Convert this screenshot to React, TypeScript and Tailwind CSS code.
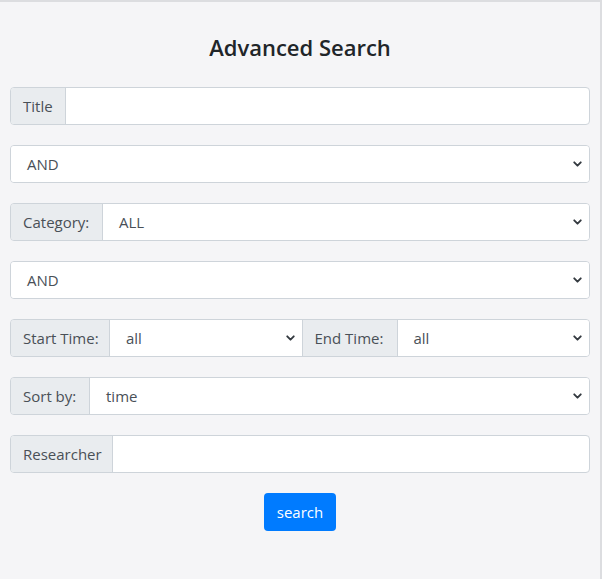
import { ChevronDown } from "lucide-react";

const font = { fontFamily: '"Open Sans", "Noto Sans", sans-serif' };

function Label({ text, width }: { text: string; width: string }) {
  return (
    <span
      className={`flex h-full shrink-0 items-center whitespace-nowrap border-r border-[#ced4da] bg-[#e9ecef] px-3 text-[15px] text-[#495057] ${width}`}
    >
      {text}
    </span>
  );
}

function Select({ value }: { value: string }) {
  return (
    <div className="relative flex h-full min-w-0 flex-1 items-center bg-white pl-[16px] text-[15px] text-[#495057]">
      <span>{value}</span>
      <ChevronDown
        className="absolute right-[5px] top-1/2 h-[13px] w-[13px] -translate-y-1/2 text-[#343a40]"
        strokeWidth={3.5}
      />
    </div>
  );
}

export default function App() {
  return (
    <div
      className="h-[579px] w-[602px] border-r-2 border-t-2 border-[#dcdde0] bg-[#f5f5f7]"
      style={font}
    >
      <div className="flex flex-col gap-5 px-[10px]">
        <h3 className="mt-[30px] mb-[5px] text-center text-[22px] font-semibold leading-[30px] text-[#212529]">
          Advanced Search
        </h3>

        <div className="flex h-[38px] overflow-hidden rounded border border-[#ced4da] bg-white">
          <Label text="Title" width="w-[55px]" />
          <div className="flex-1" />
        </div>

        <div className="flex h-[38px] overflow-hidden rounded border border-[#ced4da]">
          <Select value="AND" />
        </div>

        <div className="flex h-[38px] overflow-hidden rounded border border-[#ced4da]">
          <Label text="Category:" width="w-[92px]" />
          <Select value="ALL" />
        </div>

        <div className="flex h-[38px] overflow-hidden rounded border border-[#ced4da]">
          <Select value="AND" />
        </div>

        <div className="flex h-[38px] overflow-hidden rounded border border-[#ced4da]">
          <Label text="Start Time:" width="w-[99px]" />
          <Select value="all" />
          <span className="h-full border-l border-[#ced4da]" />
          <Label text="End Time:" width="w-[95px]" />
          <Select value="all" />
        </div>

        <div className="flex h-[38px] overflow-hidden rounded border border-[#ced4da]">
          <Label text="Sort by:" width="w-[79px]" />
          <Select value="time" />
        </div>

        <div className="flex h-[38px] overflow-hidden rounded border border-[#ced4da] bg-white">
          <Label text="Researcher" width="w-[102px]" />
          <div className="flex-1" />
        </div>

        <div className="flex justify-center">
          <button className="h-[38px] w-[72px] rounded bg-[#007bff] text-[15px] text-white">
            search
          </button>
        </div>
      </div>
    </div>
  );
}
